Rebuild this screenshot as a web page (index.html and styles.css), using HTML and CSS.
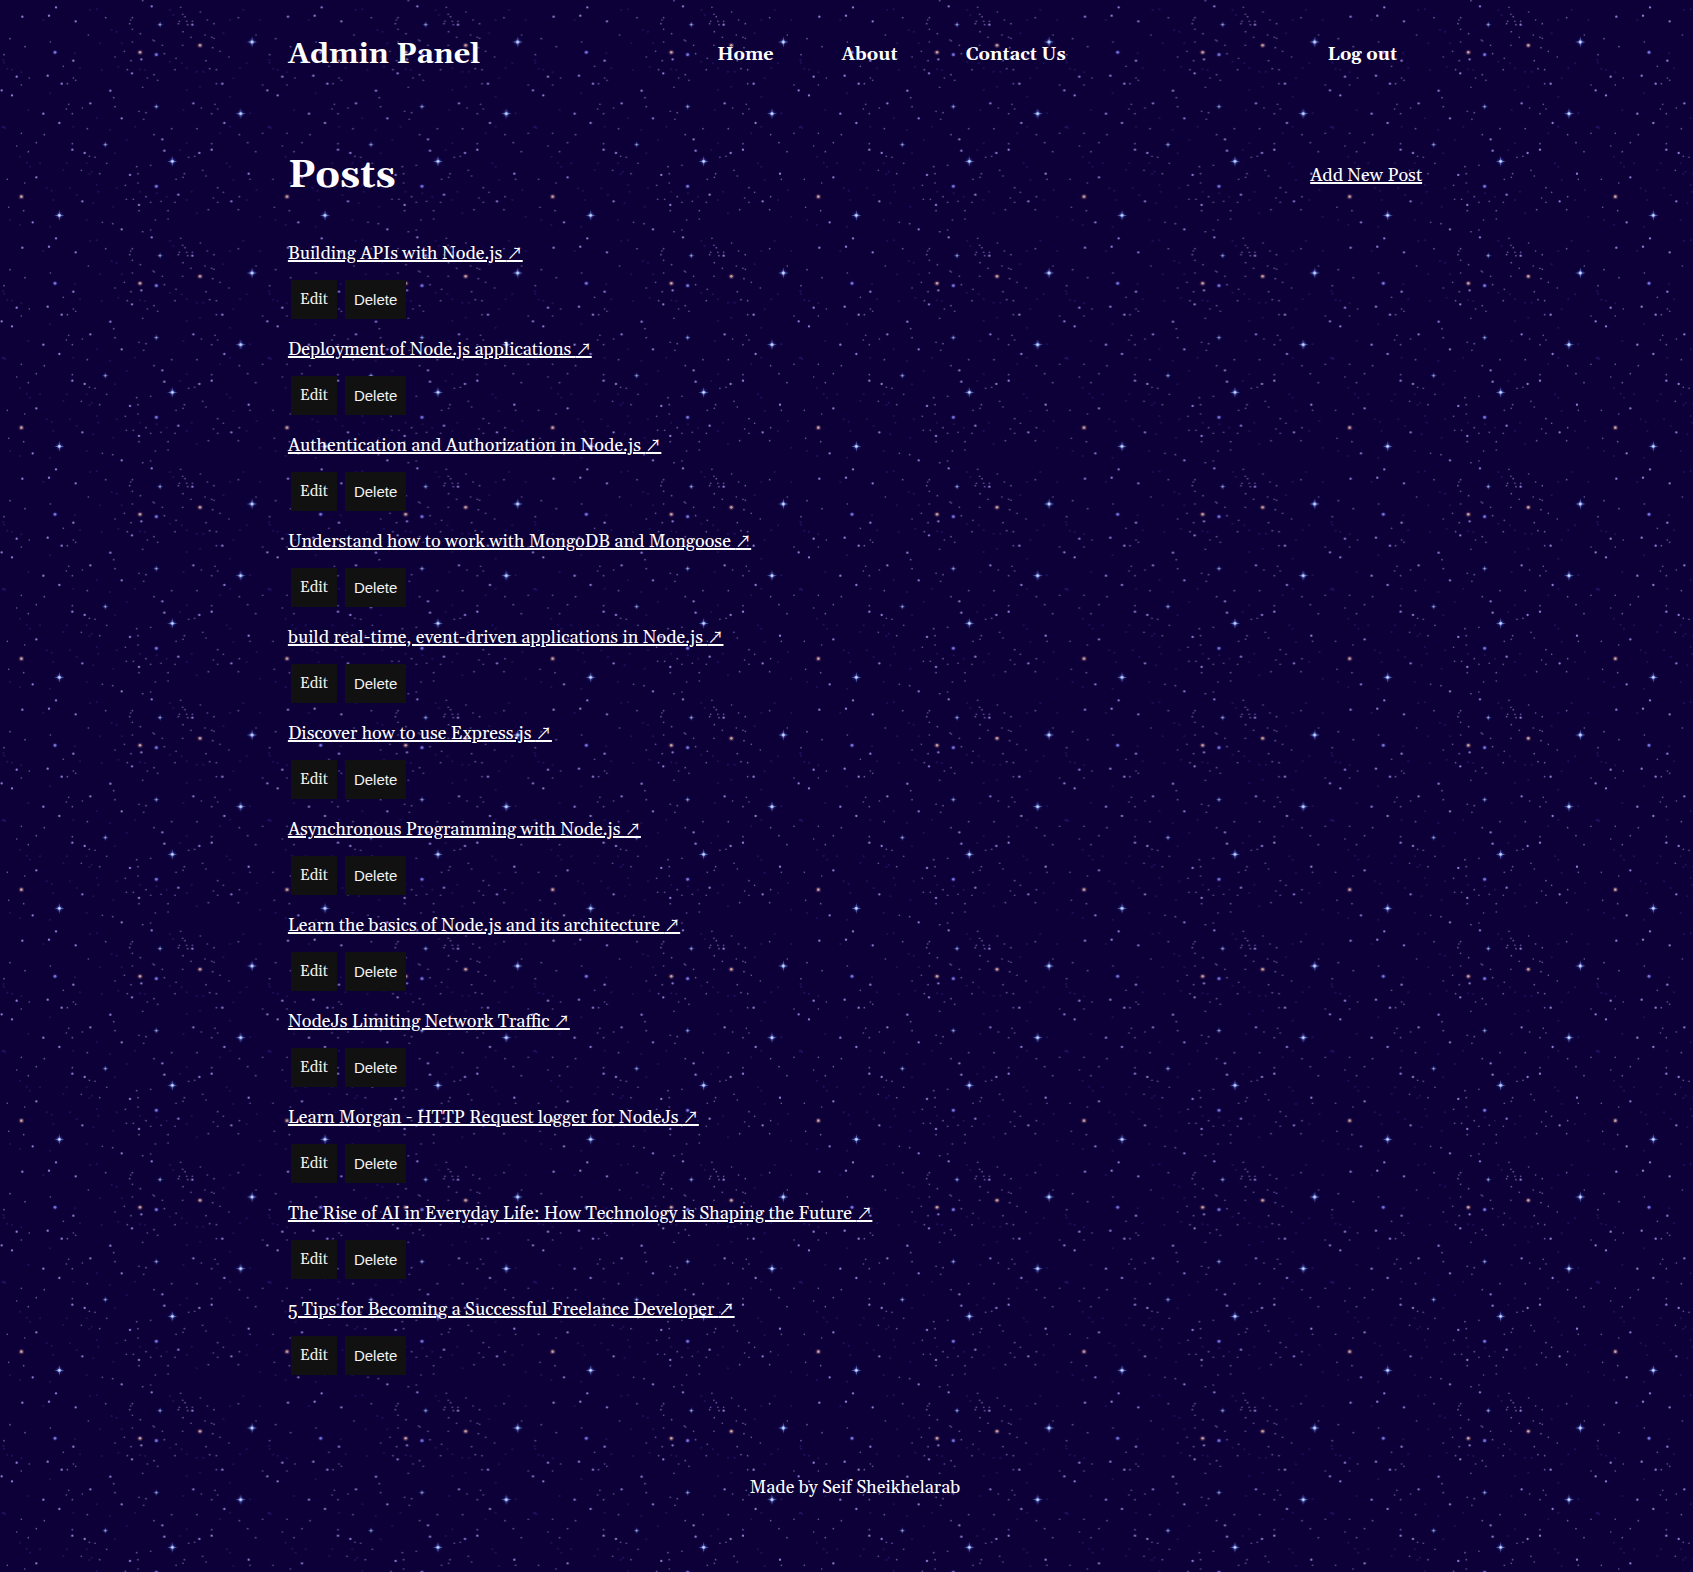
FILE: index.html
```html
<!DOCTYPE html>
<html lang="en">
<head>
<meta charset="utf-8">
<meta name="viewport" content="width=device-width, initial-scale=1">
<title>Admin Panel</title>
<link rel="stylesheet" href="styles.css">
</head>
<body>
<svg class="sky" aria-hidden="true">
  <defs>
    <radialGradient id="halo"><stop offset="0" stop-color="#5f6fe0" stop-opacity=".7"/><stop offset="1" stop-color="#3a3ab0" stop-opacity="0"/></radialGradient>
    <g id="spark">
      <circle r="13" fill="url(#halo)"/>
      <path d="M0-17L2-2L16 0L2 2L0 17L-2 2L-16 0L-2-2Z" fill="#6078cc"/>
      <circle r="5" fill="#a3bdf4"/><circle r="2" fill="#e8f2ff"/>
    </g>
    <g id="glow"><circle r="9" fill="url(#halo)"/><circle r="4" fill="#7c74e0"/></g>
    <g id="ember"><circle r="8" fill="#6a4470" opacity=".5"/><circle r="4" fill="#cfa59a"/></g>
    <pattern id="stars" width="797" height="693" patternUnits="userSpaceOnUse" patternTransform="scale(.33333)">
      <path class="dust" d="M22 206h0M36 209h0M10 180h0M12 188h0M64 217h0M130 60h0M270 30h0M290 28h0M335 90h0M350 95h0M365 130h0M300 130h0M240 205h0M225 160h0M305 210h0M355 200h0M435 210h0M420 208h0M510 185h0M545 190h0M560 205h0M590 215h0M610 215h0M700 235h0M740 190h0M720 205h0M670 100h0M690 60h0M730 30h0M780 60h0M510 30h0M520 45h0M12 380h0M8 382h0M15 384h0M85 330h0M150 280h0M220 380h0M290 355h0M330 390h0M405 380h0M380 420h0M345 460h0M260 490h0M275 515h0M268 522h0M200 490h0M190 510h0M80 488h0M90 500h0M60 470h0M120 490h0M140 565h0M155 572h0M160 600h0M210 565h0M230 585h0M290 555h0M295 575h0M280 610h0M340 620h0M350 565h0M420 575h0M470 580h0M500 590h0M560 600h0M590 640h0M575 575h0M680 490h0M690 500h0M700 540h0M770 570h0M740 600h0M780 650h0M30 660h0M60 675h0M150 680h0M260 660h0M540 450h0M560 430h0M660 400h0M690 380h0M550 330h0M560 270h0M600 260h0M690 290h0M750 340h0"/>
      <path class="tiny" d="M30 116h0M75 140h0M151 126h0M12 164h0M265 105h0M317 53h0M392 60h0M397 53h0M389 71h0M397 88h0M421 101h0M397 126h0M373 154h0M345 171h0M393 182h0M382 209h0M459 120h0M463 123h0M487 136h0M493 161h0M528 175h0M525 209h0M462 224h0M442 234h0M473 241h0M428 262h0M190 199h0M88 234h0M64 255h0M202 251h0M220 234h0M227 241h0M341 293h0M345 320h0M206 313h0M199 327h0M217 341h0M247 324h0M262 386h0M64 400h0M133 404h0M109 428h0M50 438h0M85 455h0M217 431h0M268 469h0M285 472h0M320 490h0M244 511h0M299 521h0M22 538h0M74 549h0M26 622h0M71 632h0M307 667h0M338 671h0M376 556h0M379 598h0M400 598h0M414 549h0M414 521h0M410 500h0M452 496h0M438 590h0M417 632h0M452 607h0M483 604h0M525 607h0M504 632h0M504 657h0M466 660h0M428 2h0M452 690h0M462 404h0M417 334h0M438 338h0M431 358h0M515 386h0M591 386h0M604 324h0M645 313h0M653 327h0M635 341h0M718 404h0M788 400h0M743 428h0M767 455h0M635 431h0M566 472h0M584 469h0M608 511h0M618 528h0M528 538h0M549 532h0M553 521h0M750 538h0M653 563h0M670 577h0M640 594h0M653 607h0M718 590h0M715 629h0M625 629h0M649 251h0M618 182h0M629 206h0M649 209h0M642 115h0M635 112h0M615 105h0M638 143h0M660 154h0M687 171h0M548 136h0M549 95h0M573 112h0M548 43h0M542 22h0M555 50h0M538 64h0M535 71h0M563 74h0M560 64h0M577 64h0M601 36h0M622 60h0M642 71h0M715 53h0M768 105h0M788 255h0"/>
      <path class="small" d="M67 50h0M168 22h0M147 47h0M227 64h0M220 182h0M396 220h0M424 178h0M50 230h0M143 227h0M185 251h0M36 286h0M5 271h0M331 272h0M271 310h0M130 341h0M365 355h0M178 369h0M217 449h0M254 459h0M109 532h0M247 604h0M98 667h0M365 688h0M390 525h0M417 615h0M455 19h0M577 74h0M580 310h0M673 369h0M487 418h0M493 452h0M598 459h0M635 449h0M667 251h0M746 521h0M535 584h0M694 604h0"/>
      <use href="#glow" x="165" y="157"/><use href="#glow" x="469" y="164"/><use href="#glow" x="469" y="559"/>
      <use href="#ember" x="420" y="157"/><use href="#ember" x="600" y="136"/><use href="#ember" x="64" y="590"/>
      <g opacity=".8">
        <use href="#spark" transform="translate(480 74) scale(.65)"/>
        <use href="#spark" transform="translate(469 320) scale(.65)"/>
        <use href="#spark" transform="translate(316 434) scale(.65)"/>
      </g>
      <use href="#spark" x="756" y="126"/><use href="#spark" x="722" y="341"/>
      <use href="#spark" x="517" y="484"/><use href="#spark" x="178" y="646"/>
    </pattern>
  </defs>
  <rect width="100%" height="100%" fill="url(#stars)"/>
</svg>

<div class="page">
  <header class="header">
    <a class="logo" href="#">Admin Panel</a>
    <nav class="nav">
      <a href="#">Home</a>
      <a href="#">About</a>
      <a href="#">Contact Us</a>
    </nav>
    <a class="logout" href="#">Log out</a>
  </header>

  <main>
    <div class="title-row">
      <h1>Posts</h1>
      <a href="#">Add New Post</a>
    </div>
    <ul class="posts">
      <li><a class="post" href="#">Building APIs with Node.js <span class="arrow">↗</span></a><div class="actions"><a class="btn" href="#">Edit</a><button class="btn" type="button">Delete</button></div></li>
      <li><a class="post" href="#">Deployment of Node.js applications <span class="arrow">↗</span></a><div class="actions"><a class="btn" href="#">Edit</a><button class="btn" type="button">Delete</button></div></li>
      <li><a class="post" href="#">Authentication and Authorization in Node.js <span class="arrow">↗</span></a><div class="actions"><a class="btn" href="#">Edit</a><button class="btn" type="button">Delete</button></div></li>
      <li><a class="post" href="#">Understand how to work with MongoDB and Mongoose <span class="arrow">↗</span></a><div class="actions"><a class="btn" href="#">Edit</a><button class="btn" type="button">Delete</button></div></li>
      <li><a class="post" href="#">build real-time, event-driven applications in Node.js <span class="arrow">↗</span></a><div class="actions"><a class="btn" href="#">Edit</a><button class="btn" type="button">Delete</button></div></li>
      <li><a class="post" href="#">Discover how to use Express.js <span class="arrow">↗</span></a><div class="actions"><a class="btn" href="#">Edit</a><button class="btn" type="button">Delete</button></div></li>
      <li><a class="post" href="#">Asynchronous Programming with Node.js <span class="arrow">↗</span></a><div class="actions"><a class="btn" href="#">Edit</a><button class="btn" type="button">Delete</button></div></li>
      <li><a class="post" href="#">Learn the basics of Node.js and its architecture <span class="arrow">↗</span></a><div class="actions"><a class="btn" href="#">Edit</a><button class="btn" type="button">Delete</button></div></li>
      <li><a class="post" href="#">NodeJs Limiting Network Traffic <span class="arrow">↗</span></a><div class="actions"><a class="btn" href="#">Edit</a><button class="btn" type="button">Delete</button></div></li>
      <li><a class="post" href="#">Learn Morgan - HTTP Request logger for NodeJs <span class="arrow">↗</span></a><div class="actions"><a class="btn" href="#">Edit</a><button class="btn" type="button">Delete</button></div></li>
      <li><a class="post" href="#">The Rise of AI in Everyday Life: How Technology is Shaping the Future <span class="arrow">↗</span></a><div class="actions"><a class="btn" href="#">Edit</a><button class="btn" type="button">Delete</button></div></li>
      <li><a class="post" href="#">5 Tips for Becoming a Successful Freelance Developer <span class="arrow">↗</span></a><div class="actions"><a class="btn" href="#">Edit</a><button class="btn" type="button">Delete</button></div></li>
    </ul>
  </main>

  <footer class="footer">Made by Seif Sheikhelarab</footer>
</div>
</body>
</html>
```

FILE: styles.css
```css
* {
  box-sizing: border-box;
}

body {
  position: relative;
  margin: 0;
  min-height: 100vh;
  background: #0d0038;
  color: #fff;
  font: 18px/24px Georgia, Gelasio, "Liberation Serif", serif;
}

a {
  color: inherit;
  text-decoration-thickness: 2px;
}

/* Starfield behind the whole page */
.sky {
  position: absolute;
  inset: 0;
  z-index: -1;
  width: 100%;
  height: 100%;
}

.dust,
.tiny,
.small {
  fill: none;
  stroke-linecap: round;
}

.dust {
  stroke: #1e1260;
  stroke-width: 6px;
}

.tiny {
  stroke: #65589c;
  stroke-width: 5px;
}

.small {
  stroke: #8a7cd0;
  stroke-width: 7px;
}

.page {
  width: 68%;
  margin: 0 auto;
  padding: 33px 0 68px 17px;
}

.header {
  display: flex;
  align-items: center;
  justify-content: space-between;
  height: 44px;
  font-weight: bold;
}

.header a {
  text-decoration: none;
}

.logo {
  font-size: 29px;
}

.nav {
  display: flex;
}

.nav a {
  padding: 0 34px;
}

.logout {
  padding: 0 25px;
}

.title-row {
  display: flex;
  align-items: center;
  justify-content: space-between;
  margin: 73px 0 40px;
}

h1 {
  margin: 0;
  font-size: 39px;
  line-height: 52px;
}

.posts {
  display: grid;
  gap: 19px;
  margin: 0;
  padding: 0;
  list-style: none;
}

.post {
  display: block;
  width: fit-content;
}

.arrow {
  font-family: "Noto Sans CJK JP", sans-serif;
  font-size: 16px;
  line-height: 1;
}

.actions {
  display: flex;
  gap: 8px;
  margin: 14px 0 0 3px;
}

.btn {
  padding: 8px 9px;
  border: 0;
  background: #111;
  color: #f2f2f2;
  font-size: 15px;
  line-height: 23px;
  text-decoration: none;
}

button.btn {
  font-family: "Liberation Sans", Arial, sans-serif;
}

.footer {
  margin-top: 101px;
  text-align: center;
}
```
